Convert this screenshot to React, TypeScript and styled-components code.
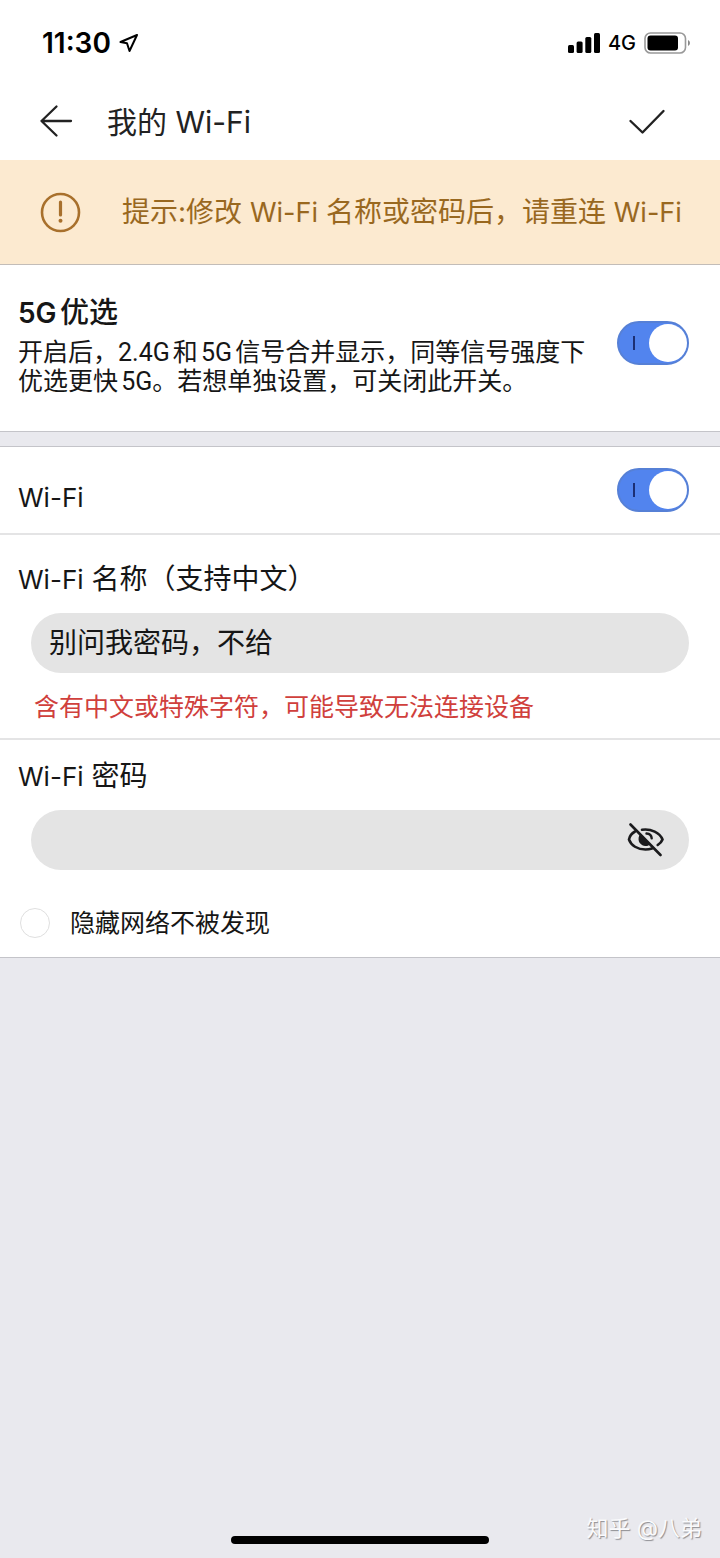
import React, { useState } from "react";
import styled, { createGlobalStyle } from "styled-components";

const GlobalStyle = createGlobalStyle`
  * { box-sizing: border-box; }
  html, body { margin: 0; padding: 0; }
  body {
    background: #e9e9ee;
    color: #161616;
    font-family: Inter, "Noto Sans CJK SC", sans-serif;
    font-size: 28px;
    line-height: 40px;
    text-autospace: normal;
  }
  h1, h2, p { margin: 0; }
  button, input { font: inherit; color: inherit; }
`;

const Screen = styled.div`
  display: flex;
  flex-direction: column;
  min-height: 100vh;
`;

const StatusBar = styled.div`
  display: flex;
  align-items: center;
  justify-content: space-between;
  height: 86px;
  padding: 0 29px 0 42px;
  background: #fff;
  color: #000;
`;

const StatusGroup = styled.div`
  display: flex;
  align-items: center;
  gap: 8px;
`;

const Time = styled.span`
  font-size: 28px;
  font-weight: 600;
`;

const Network = styled.span`
  font-size: 20px;
  font-weight: 500;
`;

const Latin = styled.span<{ $size: number; $weight?: number }>`
  font-size: ${(p) => p.$size}px;
  font-weight: ${(p) => p.$weight ?? "inherit"};
  line-height: 1;
`;

const Header = styled.header`
  display: flex;
  align-items: center;
  height: 74px;
  padding: 0 54px 4px 38px;
  background: #fff;
`;

const Title = styled.h1`
  flex: 1;
  margin-left: 33px;
  padding-top: 2px;
  font-size: 30px;
  font-weight: 400;
  color: #222;
`;

const IconButton = styled.button`
  display: flex;
  padding: 0;
  border: 0;
  background: none;
  cursor: pointer;
`;

const Notice = styled.div`
  display: flex;
  align-items: center;
  gap: 41px;
  min-height: 105px;
  padding: 0 24px 0 40px;
  border-bottom: 1px solid #c3bdb8;
  background: #fcead0;
  color: #99681f;
`;

const Section = styled.section`
  background: #fff;
  border-bottom: 1px solid #c4c4c9;
`;

const GappedSection = styled(Section)`
  margin-top: 14px;
  border-top: 1px solid #c4c4c9;
`;

const SwitchRow = styled.div<{ $tall?: boolean }>`
  display: flex;
  align-items: ${(p) => (p.$tall ? "flex-start" : "center")};
  justify-content: space-between;
  gap: 24px;
  padding: ${(p) => (p.$tall ? "28px 31px 35px 18px" : "21px 31px 21px 18px")};
`;

const SwitchText = styled.div`
  flex: 1;
`;

const FeatureTitle = styled.label`
  display: block;
  font-size: 29px;
  font-weight: 500;
`;

const Description = styled.p`
  margin-top: 5px;
  font-family: Roboto, "Noto Sans CJK SC", sans-serif;
  font-size: 25px;
  line-height: 29px;
`;

const RowLabel = styled.label`
  padding-top: 16px;
  font-size: 26px;
  line-height: 28px;
`;

const Switch = styled.input<{ $lowered?: boolean }>`
  appearance: none;
  position: relative;
  flex: none;
  width: 72px;
  height: 44px;
  margin: ${(p) => (p.$lowered ? "28px 0 0" : "0")};
  border: 2px solid #5680d6;
  border-radius: 22px;
  background: #5284ee;
  cursor: pointer;

  &::before {
    content: "";
    position: absolute;
    left: 14px;
    top: 13px;
    width: 2px;
    height: 14px;
    background: #1c2f74;
  }

  &::after {
    content: "";
    position: absolute;
    right: 0;
    top: 1px;
    width: 38px;
    height: 38px;
    border-radius: 50%;
    background: #fff;
  }

  &:not(:checked) {
    border-color: #bbb;
    background: #ccc;
  }

  &:not(:checked)::after {
    right: 30px;
  }
`;

const Field = styled.div`
  padding: 24px 31px 11px 18px;
  border-top: 2px solid #e4e4e5;
`;

const PasswordField = styled(Field)`
  padding: 16px 31px 33px 18px;
`;

const FieldLabel = styled.label`
  display: block;
`;

const InputShell = styled.div`
  display: flex;
  align-items: center;
  height: 60px;
  margin: 14px 0 0 13px;
  padding: 0 24px 0 18px;
  border-radius: 30px;
  background: #e4e4e4;
`;

const TextInput = styled.input`
  flex: 1;
  min-width: 0;
  padding: 0;
  border: 0;
  outline: 0;
  background: none;
`;

const Warning = styled.p`
  margin: 14px 0 0 16px;
  font-size: 25px;
  color: #d0403c;
`;

const CheckRow = styled.label`
  display: flex;
  align-items: center;
  gap: 20px;
  padding: 0 18px 14px 20px;
  font-size: 25px;
`;

const RoundCheck = styled.input`
  appearance: none;
  width: 30px;
  height: 30px;
  margin: 0;
  border: 1px solid #dfdfdf;
  border-radius: 50%;
  background: #fff;

  &:checked {
    background: #5284ee;
  }
`;

const Footer = styled.footer`
  display: grid;
  grid-template-columns: 1fr 258px 1fr;
  align-items: end;
  margin-top: auto;
  padding: 0 18px 14px;
`;

const HomeIndicator = styled.div`
  grid-column: 2;
  height: 8px;
  border-radius: 4px;
  background: #000;
`;

const Watermark = styled.span`
  justify-self: end;
  font-size: 22px;
  line-height: 32px;
  white-space: nowrap;
  color: #fafafc;
  text-shadow: 1px 1px 1px #8d8d92;
`;

const LocationIcon = () => (
  <svg width="20" height="20" viewBox="0 0 20 20" fill="none" stroke="#000" strokeWidth="2" strokeLinejoin="round">
    <path d="M18 2 1.5 9 8 10.3 10.5 18Z" />
  </svg>
);

const SignalIcon = () => (
  <svg width="32" height="20" viewBox="0 0 32 20">
    <rect x="0" y="12" width="6" height="8" rx="1.5" />
    <rect x="8.6" y="8.6" width="6" height="11.4" rx="1.5" />
    <rect x="17.3" y="4" width="6" height="16" rx="1.5" />
    <rect x="26" y="0" width="6" height="20" rx="1.5" />
  </svg>
);

const BatteryIcon = () => (
  <svg width="47" height="22" viewBox="0 0 47 22">
    <rect x="1" y="1" width="40.5" height="20" rx="5.5" fill="none" stroke="#999" strokeWidth="1.6" />
    <rect x="3.5" y="3.5" width="30.5" height="15" rx="3" />
    <path d="M44 8v6q2-1 2-3t-2-3Z" fill="#888" />
  </svg>
);

const BackIcon = () => (
  <svg width="36" height="36" viewBox="0 0 36 36" fill="none" stroke="#222" strokeWidth="2.3" strokeLinecap="round" strokeLinejoin="round">
    <path d="M33 18H3.5M18.5 3.5 3.5 18l15 14.5" />
  </svg>
);

const ConfirmIcon = () => (
  <svg width="38" height="28" viewBox="0 0 38 28" fill="none" stroke="#222" strokeWidth="2.4" strokeLinecap="round" strokeLinejoin="round">
    <path d="M2.5 14 14.5 25.5 35.5 4" />
  </svg>
);

const AlertIcon = () => (
  <svg width="41" height="41" viewBox="0 0 41 41" fill="none" stroke="#a8702c" strokeWidth="2.6" strokeLinecap="round">
    <circle cx="20.5" cy="20.5" r="18.5" />
    <path d="M20.5 10v13" strokeWidth="3.2" />
    <circle cx="20.5" cy="28.8" r="2" fill="#a8702c" stroke="none" />
  </svg>
);

const HiddenEyeIcon = () => (
  <svg width="38" height="34" viewBox="0 0 38 34" fill="none" stroke="#1b1b1d" strokeWidth="2.6" strokeLinecap="round">
    <path d="M8 8.5C4.5 10.5 2.5 13.5 2 16.5c2 6 8.5 10 16.5 10 2.5 0 4.5-.3 6.500-.9" />
    <path d="M15 6.7c9-1.3 18 3 20.5 9.8-.7 2-2.5 4-4.8 5.5" />
    <path d="M13 11.5c-3 4-1.5 10.5 5 11.5 2.5.2 4-.7 5.5-2Z" fill="#1b1b1d" stroke="none" />
    <path d="M19.5 10.5c3 .2 5 2 5.2 4.800" strokeWidth="2.4" />
    <path d="M3.5 1.5 33.5 32" />
  </svg>
);

export default function App() {
  const [name, setName] = useState("别问我密码，不给");
  const [password, setPassword] = useState("");
  const [revealed, setRevealed] = useState(false);

  return (
    <Screen>
      <GlobalStyle />
      <StatusBar>
        <StatusGroup>
          <Time>11:30</Time>
          <LocationIcon />
        </StatusGroup>
        <StatusGroup>
          <SignalIcon />
          <Network>4G</Network>
          <BatteryIcon />
        </StatusGroup>
      </StatusBar>

      <Header>
        <IconButton type="button" aria-label="返回"><BackIcon /></IconButton>
        <Title>我的 Wi-Fi</Title>
        <IconButton type="button" aria-label="保存"><ConfirmIcon /></IconButton>
      </Header>

      <Notice role="note">
        <AlertIcon />
        <p>
          提示:修改 <Latin $size={27}>Wi-Fi</Latin> 名称或密码后，请重连 <Latin $size={27}>Wi-Fi</Latin>
        </p>
      </Notice>

      <Section>
        <SwitchRow $tall>
          <SwitchText>
            <FeatureTitle htmlFor="prefer-5g">
              <Latin $size={28} $weight={600}>5G</Latin>优选
            </FeatureTitle>
            <Description>
              开启后，2.4G和5G信号合并显示，同等信号强度下优选更快5G。若想单独设置，可关闭此开关。
            </Description>
          </SwitchText>
          <Switch id="prefer-5g" type="checkbox" role="switch" defaultChecked $lowered />
        </SwitchRow>
      </Section>

      <GappedSection>
        <SwitchRow>
          <RowLabel htmlFor="wifi">Wi-Fi</RowLabel>
          <Switch id="wifi" type="checkbox" role="switch" defaultChecked />
        </SwitchRow>
        <Field>
          <FieldLabel htmlFor="wifi-name"><Latin $size={26}>Wi-Fi</Latin> 名称（支持中文）</FieldLabel>
          <InputShell>
            <TextInput id="wifi-name" type="text" value={name} onChange={(e) => setName(e.target.value)} />
          </InputShell>
          <Warning>含有中文或特殊字符，可能导致无法连接设备</Warning>
        </Field>
        <PasswordField>
          <FieldLabel htmlFor="wifi-password"><Latin $size={26}>Wi-Fi</Latin> 密码</FieldLabel>
          <InputShell>
            <TextInput
              id="wifi-password"
              type={revealed ? "text" : "password"}
              value={password}
              onChange={(e) => setPassword(e.target.value)}
            />
            <IconButton type="button" aria-label="显示密码" onClick={() => setRevealed(!revealed)}>
              <HiddenEyeIcon />
            </IconButton>
          </InputShell>
        </PasswordField>
        <CheckRow>
          <RoundCheck type="checkbox" />
          隐藏网络不被发现
        </CheckRow>
      </GappedSection>

      <Footer>
        <HomeIndicator />
        <Watermark>知乎 @八弟</Watermark>
      </Footer>
    </Screen>
  );
}
